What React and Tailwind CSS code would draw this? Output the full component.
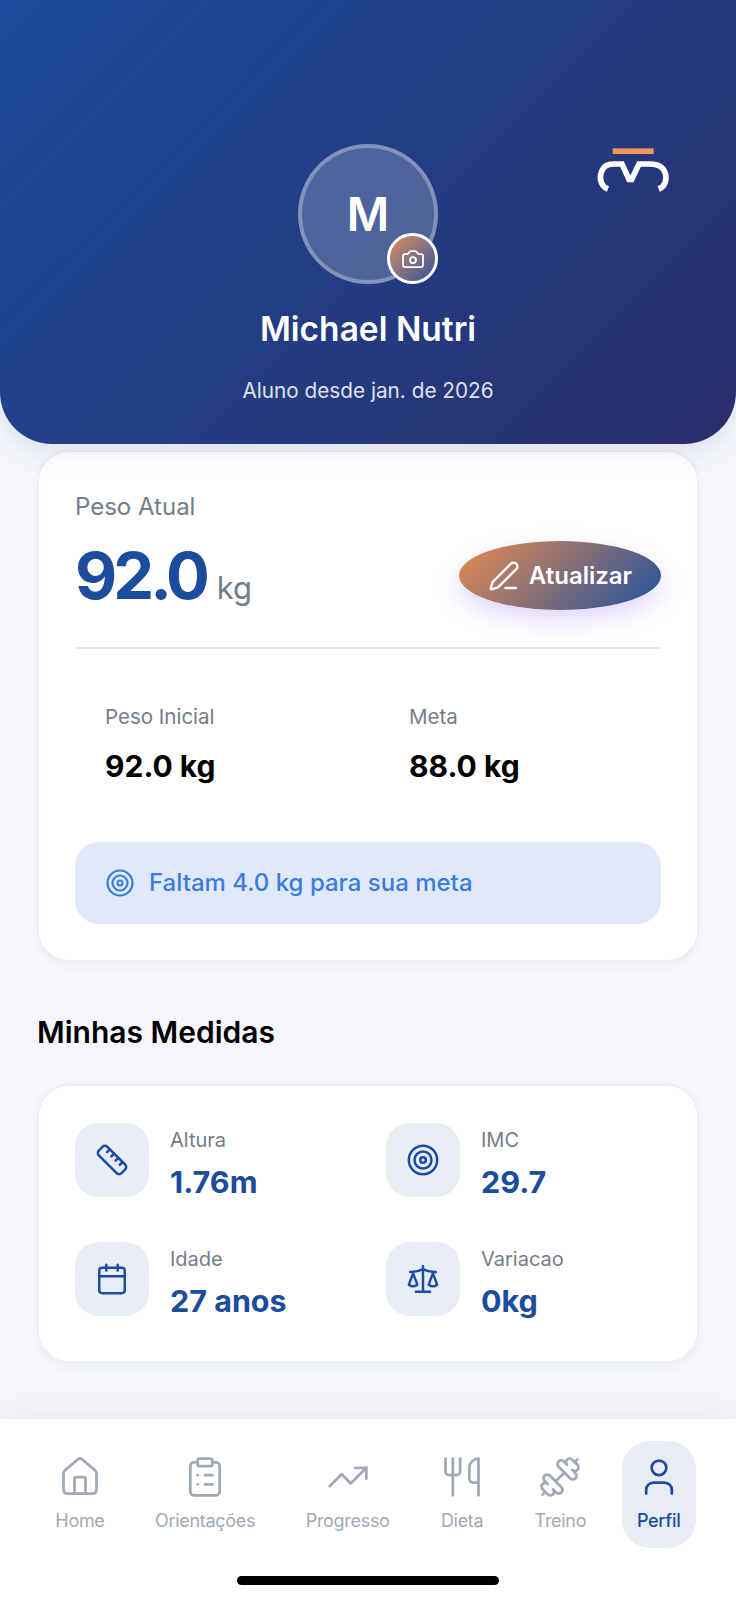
import { Camera, PenLine, Target, Ruler, Calendar, Scale, House, ClipboardList, TrendingUp, Utensils, Dumbbell, User } from 'lucide-react'

const navItems = [
  { label: 'Home', icon: House },
  { label: 'Orientações', icon: ClipboardList },
  { label: 'Progresso', icon: TrendingUp },
  { label: 'Dieta', icon: Utensils },
  { label: 'Treino', icon: Dumbbell },
  { label: 'Perfil', icon: User, active: true },
]

const measures = [
  { label: 'Altura', value: '1.76m', icon: Ruler },
  { label: 'IMC', value: '29.7', icon: Target },
  { label: 'Idade', value: '27 anos', icon: Calendar },
  { label: 'Variacao', value: '0kg', icon: Scale },
]

function Logo() {
  return (
    <svg viewBox="0 0 330 210" className="absolute left-[570px] top-[130px] h-[70px] w-[110px]" fill="none">
      <rect x="128" y="55" width="123" height="17" fill="#f0975c" />
      <path
        d="M114 177 C96 170 87 150 93 130 C98 111 112 102 130 102 L156 102 L177 148 L185 148 L207 102 L240 102 C262 102 280 111 286 130 C292 150 284 170 266 177"
        stroke="#fff"
        strokeWidth="17"
      />
    </svg>
  )
}

export default function App() {
  return (
    <div className="flex h-[1600px] w-[736px] flex-col overflow-hidden bg-[#f5f7fb] font-['Inter',sans-serif]">
      {/* Header */}
      <div className="relative flex h-[444px] shrink-0 flex-col items-center rounded-b-[52px] bg-[linear-gradient(135deg,#1b4c9d,#2a2e6a)] pt-[144px] shadow-[0_8px_30px_rgba(30,60,120,0.12)]">
        <Logo />
        <div className="relative flex h-[140px] w-[140px] items-center justify-center rounded-full border-4 border-white/30 bg-white/20">
          <span className="text-[46px] font-semibold text-white">M</span>
          <div className="absolute left-[85px] top-[85px] flex h-[51px] w-[51px] items-center justify-center rounded-full border-[3px] border-white bg-gradient-to-br from-[#dc8a55] to-[#2f4f97]">
            <Camera size={24} strokeWidth={1.75} className="text-white" />
          </div>
        </div>
        <h1 className="mt-[25px] text-[33.5px] font-semibold leading-[40px] text-white">Michael Nutri</h1>
        <p className="mt-[28px] text-[20.75px] leading-[28px] text-white/85">Aluno desde jan. de 2026</p>
      </div>

      {/* Peso */}
      <div className="mx-[37px] mt-[6px] rounded-[32px] border-2 border-[#eceff4] bg-white px-[36px] pb-[36px] pt-[39px] shadow-[0_4px_12px_rgba(30,60,120,0.05)]">
        <p className="text-[24px] leading-[32px] text-[#737d8c]">Peso Atual</p>
        <div className="mt-[18px] flex h-[69px] items-center justify-between">
          <div className="flex items-baseline gap-[11px]">
            <span className="text-[65px] font-bold leading-none tracking-[-4px] text-[#1b4c9d]">92.0</span>
            <span className="text-[31px] leading-none text-[#737d8c]">kg</span>
          </div>
          <button className="flex h-[69px] w-[202px] items-center justify-center gap-[9px] rounded-[50%] bg-[linear-gradient(135deg,#e98c4e,#20509f)] shadow-[0_10px_24px_rgba(130,90,230,0.25)]">
            <PenLine size={32} strokeWidth={1.75} className="text-white" />
            <span className="text-[24px] font-semibold text-white">Atualizar</span>
          </button>
        </div>
        <div className="mt-[37px] h-[2px] bg-[#e5e9f0]" />
        <div className="mt-[54px] grid grid-cols-[304px_1fr] pl-[30px]">
          <div>
            <p className="text-[20.5px] leading-[28px] text-[#737d8c]">Peso Inicial</p>
            <p className="mt-[17px] text-[30px] font-bold leading-[36px] text-black">92.0 kg</p>
          </div>
          <div>
            <p className="text-[20.5px] leading-[28px] text-[#737d8c]">Meta</p>
            <p className="mt-[17px] text-[30px] font-bold leading-[36px] text-black">88.0 kg</p>
          </div>
        </div>
        <div className="mt-[58px] flex h-[82px] items-center gap-[14px] rounded-[24px] bg-[#e0e9fa] pl-[30px]">
          <Target size={30} strokeWidth={1.75} className="text-[#3b7ddd]" />
          <span className="text-[24px] font-medium text-[#3b7ddd]">Faltam 4.0 kg para sua meta</span>
        </div>
      </div>

      <h2 className="ml-[37px] mt-[50px] text-[30px] font-semibold leading-[40px] text-black">Minhas Medidas</h2>

      {/* Medidas */}
      <div className="mx-[37px] mt-[32px] grid h-[279px] grid-cols-[311px_1fr] content-start gap-y-[45px] rounded-[32px] border-2 border-[#eceff4] bg-white px-[36px] pt-[37px] shadow-[0_4px_12px_rgba(30,60,120,0.05)]">
        {measures.map((m) => {
          const Icon = m.icon
          return (
            <div key={m.label} className="flex h-[74px] gap-[21px]">
              <div className="flex h-[74px] w-[74px] items-center justify-center rounded-[24px] bg-[#e8edf5]">
                <Icon size={34} strokeWidth={1.75} className="text-[#1b4c9d]" />
              </div>
              <div className="pt-[5px]">
                <p className="text-[20px] leading-[24px] text-[#737d8c]">{m.label}</p>
                <p className="mt-[12px] text-[30.5px] font-bold leading-[36px] text-[#1b4c9d]">{m.value}</p>
              </div>
            </div>
          )
        })}
      </div>

      {/* Bottom nav */}
      <div className="mt-auto flex flex-col items-center bg-white pb-[15px] pt-[22px] shadow-[0_-8px_30px_rgba(0,0,0,0.06)]">
        <div className="flex gap-[20.5px]">
          {navItems.map((item) => {
            const Icon = item.icon
            return (
              <div
                key={item.label}
                className={`flex h-[107px] flex-col items-center rounded-[28px] px-[15px] pt-[14px] ${item.active ? 'bg-[#e8edf5] text-[#1b4c9d]' : 'text-[#a0a9b8]'}`}
              >
                <Icon size={44} strokeWidth={1.5} />
                <span className={`mt-[10px] text-[18px] leading-[24px] tracking-[-0.3px] ${item.active ? 'font-medium' : ''}`}>{item.label}</span>
              </div>
            )
          })}
        </div>
        <div className="mt-[28px] h-[9px] w-[262px] rounded-full bg-black" />
      </div>
    </div>
  )
}
